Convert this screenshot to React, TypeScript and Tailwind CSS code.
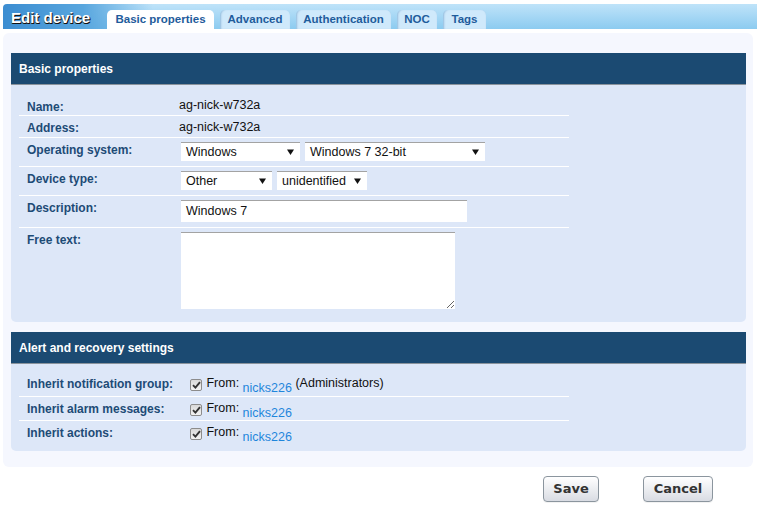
import React from "react";

const Arrow = () => (
  <svg width="7" height="6" viewBox="0 0 7 6" className="shrink-0">
    <path d="M0 0.5 H7 L3.5 6 Z" fill="#111" />
  </svg>
);

const Select = ({ value, w }: { value: string; w: string }) => (
  <div
    className={`${w} h-[19px] bg-white border-t border-[#a3a3a3] flex items-center justify-between pl-[5px] pr-[6px] text-[12.5px] text-[#111] leading-none`}
  >
    <span>{value}</span>
    <Arrow />
  </div>
);

const Check = () => (
  <span className="inline-flex items-center justify-center w-[12px] h-[12px] border border-[#8c8c8c] rounded-[2px] bg-linear-to-b from-[#d9d9d9] to-[#f3f3f3] align-[-2px]">
    <svg width="9" height="8" viewBox="0 0 9 8">
      <path d="M1 4.2 L3.4 6.6 L8 1.2" stroke="#333" strokeWidth="1.9" fill="none" />
    </svg>
  </span>
);

const Label = ({ children, w = "w-[160px]" }: { children: React.ReactNode; w?: string }) => (
  <div className={`${w} shrink-0 pl-[8px] pt-[4px] leading-[16px] text-[12px] font-bold text-[#1d4b76]`}>
    {children}
  </div>
);

const Row = ({ h, children, last }: { h: string; children: React.ReactNode; last?: boolean }) => (
  <div className={`${h} flex ${last ? "" : "border-b border-white"}`}>{children}</div>
);

const Tab = ({ label, w, active }: { label: string; w: string; active?: boolean }) => (
  <div
    className={`${w} h-[19px] rounded-t-[5px] flex items-center justify-center pt-[1px] text-[11.5px] font-bold text-[#1f5c9b] ${
      active
        ? "bg-white"
        : "bg-[#cfe9fb] shadow-[inset_2px_0_2px_-1px_rgba(70,130,185,0.45),inset_-1px_0_1px_-1px_rgba(70,130,185,0.3)]"
    }`}
  >
    {label}
  </div>
);

const Link = ({ children }: { children: React.ReactNode }) => (
  <span className="text-[#1f86dc] align-[-5px]">{children}</span>
);

export default function App() {
  return (
    <div className="w-[757px] h-[512px] bg-white font-['Liberation_Sans',Arial,sans-serif] overflow-hidden">
      {/* Header bar */}
      <div className="ml-[3px] mt-[4px] h-[25px] flex items-end rounded-tl-[4px] bg-[linear-gradient(to_right,#3c8dd1_0px,#58a6de_80px,rgba(88,166,222,0)_150px),linear-gradient(to_bottom,#bfe3f9,#8ccbf0)]">
        <div className="w-[104px] h-full flex items-center pt-[4px] pl-[8px] text-[15px] font-bold text-white [text-shadow:1px_1px_0_#111,0_1px_0_#222]">
          Edit device
        </div>
        <div className="flex items-end gap-[6px]">
          <Tab label="Basic properties" w="w-[107px]" active />
          <Tab label="Advanced" w="w-[70px]" />
          <Tab label="Authentication" w="w-[95px]" />
          <Tab label="NOC" w="w-[40px]" />
          <Tab label="Tags" w="w-[43px]" />
        </div>
      </div>

      {/* Main container */}
      <div className="ml-[3px] mt-[4px] w-[750px] h-[434px] bg-[#f5f7fe] rounded-[6px] pt-[20px] pl-[8px]">
        {/* Panel 1 */}
        <div className="w-[735px]">
          <div className="h-[32px] bg-[#1b4a72] border-b border-[#8a939c] flex items-center pl-[8px] text-[12px] font-bold text-white">
            Basic properties
          </div>
          <div className="h-[237px] bg-[#dde7f8] rounded-b-[5px] pt-[10px] pl-[8px]">
            <div className="w-[550px]">
              <Row h="h-[21px]">
                <Label>Name:</Label>
                <div className="pt-[2px] leading-[16px] text-[12.5px] text-[#111]">ag-nick-w732a</div>
              </Row>
              <Row h="h-[22px]">
                <Label>Address:</Label>
                <div className="pt-[3px] leading-[16px] text-[12.5px] text-[#111]">ag-nick-w732a</div>
              </Row>
              <Row h="h-[29px]">
                <Label>Operating system:</Label>
                <div className="pt-[4px] pl-[2px] flex gap-[5px]">
                  <Select value="Windows" w="w-[119px]" />
                  <Select value="Windows 7 32-bit" w="w-[180px]" />
                </div>
              </Row>
              <Row h="h-[29px]">
                <Label>Device type:</Label>
                <div className="pt-[4px] pl-[2px] flex gap-[5px]">
                  <Select value="Other" w="w-[91px]" />
                  <Select value="unidentified" w="w-[90px]" />
                </div>
              </Row>
              <Row h="h-[32px]">
                <Label>Description:</Label>
                <div className="pt-[4px] pl-[2px]">
                  <div className="w-[286px] h-[22px] bg-white border-t border-[#a3a3a3] flex items-center pl-[5px] text-[12.5px] text-[#111]">
                    Windows 7
                  </div>
                </div>
              </Row>
              <Row h="h-[90px]" last>
                <Label>Free text:</Label>
                <div className="pt-[4px] pl-[2px]">
                  <textarea
                    readOnly
                    className="block w-[274px] h-[77px] bg-white border-0 border-t border-[#a3a3a3] outline-none"
                  />
                </div>
              </Row>
            </div>
          </div>
        </div>

        {/* Panel 2 */}
        <div className="w-[735px] mt-[10px]">
          <div className="h-[32px] bg-[#1b4a72] border-b border-[#8a939c] flex items-center pl-[8px] text-[12px] font-bold text-white">
            Alert and recovery settings
          </div>
          <div className="h-[87px] bg-[#dde7f8] rounded-b-[5px] pt-[8px] pl-[8px]">
            <div className="w-[550px]">
              <Row h="h-[25px]">
                <Label w="w-[171px]">Inherit notification group:</Label>
                <div className="pt-[3px] leading-[16px] text-[12.5px] text-[#111] whitespace-nowrap">
                  <Check /> <span className="ml-[1px]">From:</span> <Link>nicks226</Link> (Administrators)
                </div>
              </Row>
              <Row h="h-[24px]">
                <Label w="w-[171px]">Inherit alarm messages:</Label>
                <div className="pt-[3px] leading-[16px] text-[12.5px] text-[#111] whitespace-nowrap">
                  <Check /> <span className="ml-[1px]">From:</span> <Link>nicks226</Link>
                </div>
              </Row>
              <Row h="h-[24px]" last>
                <Label w="w-[171px]">Inherit actions:</Label>
                <div className="pt-[3px] leading-[16px] text-[12.5px] text-[#111] whitespace-nowrap">
                  <Check /> <span className="ml-[1px]">From:</span> <Link>nicks226</Link>
                </div>
              </Row>
            </div>
          </div>
        </div>
      </div>

      {/* Buttons */}
      <div className="mt-[9px] flex justify-end gap-[44px] pr-[44px]">
        <button className="w-[56px] h-[26px] rounded-[4px] border border-[#8b959e] bg-linear-to-b from-white to-[#d9dce3] font-['DejaVu_Sans',sans-serif] font-bold text-[13px] text-[#333] shadow-[0_1px_0_rgba(0,0,0,0.05)]">
          Save
        </button>
        <button className="w-[70px] h-[26px] rounded-[4px] border border-[#8b959e] bg-linear-to-b from-white to-[#d9dce3] font-['DejaVu_Sans',sans-serif] font-bold text-[13px] text-[#333] shadow-[0_1px_0_rgba(0,0,0,0.05)]">
          Cancel
        </button>
      </div>
    </div>
  );
}
